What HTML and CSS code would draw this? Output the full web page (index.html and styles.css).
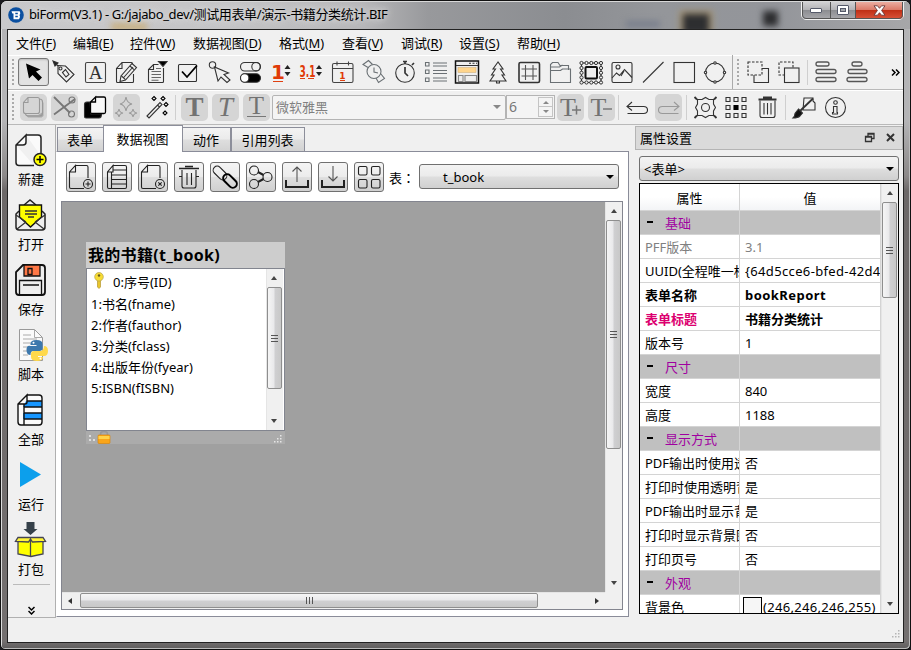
FILE: index.html
```html
<!DOCTYPE html>
<html lang="zh-CN">
<head>
<meta charset="utf-8">
<title>biForm</title>
<link rel="stylesheet" href="styles.css">
</head>
<body>
<div class="window">
  <header class="titlebar">
    <svg class="app-icon" width="16" height="16" viewBox="0 0 16 16"><circle cx="8" cy="8" r="7.8" fill="#0a4fa0"/><path d="M3.5 4.2h8.2q1.3 3-.4 3.8 1.6 1.5-.4 4.200H5.500V6.500H4.300z" fill="#fff"/><path d="M7.300 6.500h2.500M7.300 9.500h2.500" stroke="#0a4fa0" stroke-width="1.300"/></svg>
    <span class="title-text">biForm(V3.1) - G:/jajabo_dev/测试用表单/演示-书籍分类统计.BIF</span>
    <div class="glass"><i class="blot a"></i><i class="blot b"></i><i class="blot c"></i><i class="blot d"></i></div>
    <div class="winbtns">
      <span class="wb"><svg width="14" height="8" viewBox="0 0 14 8"><rect x="1.500" y="2.500" width="11" height="4" rx=".5" fill="#fff" stroke="#555a6a"/></svg></span>
      <span class="wb mid"><svg width="12" height="10" viewBox="0 0 12 10"><rect x=".5" y=".5" width="11" height="9" rx=".5" fill="#fff" stroke="#555a6a"/><rect x="3.500" y="3.500" width="5" height="3" fill="#a5a8ad" stroke="#555a6a"/></svg></span>
      <span class="wb close"><svg width="13" height="11" viewBox="0 0 13 11"><path d="M1 .8h3.500l2 2.500 2-2.500H12L8.600 5.500 12 10.200H8.500l-2-2.500-2 2.500H1l3.400-4.700z" fill="#fff" stroke="#6b3a3a" stroke-width=".9"/></svg></span>
    </div>
  </header>
  <div class="client">
    <nav class="menu">
      <span>文件(<u>F</u>)</span><span>编辑(<u>E</u>)</span><span>控件(<u>W</u>)</span><span>数据视图(<u>D</u>)</span><span>格式(<u>M</u>)</span><span>查看(<u>V</u>)</span><span>调试(<u>R</u>)</span><span>设置(<u>S</u>)</span><span>帮助(<u>H</u>)</span>
    </nav>
    <div class="toolbar">
      <i class="grip"></i>
      <svg class="ic pressed"><path d="M8 7l3 15 3.500-3.500 6 6 3.500-3.500-6-6 4.500-2z" fill="#000"/></svg>
      <svg class="ic"><path d="M5 5l4 4M9 8.500l7.500.5L25 17.500 17.500 25 9 16.500z"/><path d="M13.500 15.500l3-3 3.500 5-3 2.500z"/><circle cx="11.500" cy="11.500" r="1.500"/><path d="M4 4l5 2-3 3z" fill="#222"/></svg>
      <svg class="ic"><rect x="5.500" y="5.500" width="20" height="20" rx="1.500" stroke="#444"/><text x="15.500" y="22" class="serif" font-size="19">A</text></svg>
      <svg class="ic"><path d="M21.500 8V6.500q0-1-1-1H11l-5.500 6v13q0 1 1 1h15q1 0 1-1V17M11 5.500v6H5.500"/><path d="M21 6.500l4.500 4L14.500 23 9 24.500l1-5.500z" fill="#f0f0f0"/><path d="M19 9l4 3.700M10.500 19l4 3.700M12.700 20.500L22 10"/></svg>
      <svg class="ic"><path d="M16.500 7.500h-5l-5 5v12q0 1 1 1h13q1 0 1-1V11M11.500 7.500v5h-5"/><path d="M9.500 14.500h9.500M9.500 17.500h9.500M9.500 20.500h9.500M9.500 23.300h7M14 11.500h5" stroke="#666"/><path d="M16.500 4.500h8.500l-4 5z" fill="#000"/></svg>
      <svg class="ic"><rect x="5.500" y="7.500" width="18" height="17" rx="1"/><path d="M9 14.500l5 5.500L24 8.500" stroke="#000" stroke-width="1.800"/></svg>
      <svg class="ic"><circle cx="8.500" cy="8" r="3.200"/><path d="M10.500 10l3.500 14 3-4 6 5.500 3-2.500-6-5.500 4.500-1.500z"/></svg>
      <svg class="ic"><rect x="5.500" y="5.500" width="20" height="8.500" rx="4.250"/><circle cx="21" cy="9.700" r="4.200"/><rect x="5.500" y="16.800" width="20" height="8.500" rx="4.250" fill="#000"/><circle cx="9.700" cy="21" r="4.200" fill="#fff"/></svg>
      <svg class="ic num"><text x="12" y="21.500" font-size="21">1</text><path d="M7 24.500h10"/><path d="M18.500 12l3-4 3 4zM18.500 15l3 4 3-4z" class="blk"/></svg>
      <svg class="ic num"><text x="10.500" y="20" font-size="14" textLength="16" lengthAdjust="spacingAndGlyphs">3.1</text><path d="M3 21.500h5M11 21.500h6"/><path d="M19 12l3-4 3 4zM19 15l3 4 3-4z" class="blk"/></svg>
      <svg class="ic num"><g class="ln"><rect x="4.500" y="6.500" width="20.500" height="19" rx="1.500"/><path d="M4.500 11.500H25M9 4.500v4M20.500 4.500v4"/></g><text x="14.500" y="21.500" font-size="9">1</text><path d="M12 23.500h5"/></svg>
      <svg class="ic soft"><circle cx="15" cy="14.500" r="7"/><path d="M9 10.500l-5-3 5.500-4 4 4M17 21l2.500 4.500 6-4-4-5M15 10.500v4.500l4 1"/></svg>
      <svg class="ic"><circle cx="15" cy="16" r="9.300"/><path d="M15 10v6l3 3M13 4.500h4M15 5v2M22 8l2-2" stroke-width="1.700"/></svg>
      <svg class="ic soft"><path d="M12 6h14M12 9h14M12 13.500h14M12 16.500h14M12 21h14M12 24h14"/><path d="M4.500 5.500h3.500v3.500H4.500zM4.500 13h3.500v3.500H4.500zM4.500 21h3.500v3.500H4.500z"/></svg>
      <svg class="ic"><rect x="3.500" y="4" width="23" height="22" fill="#eee" stroke="#111" stroke-width="1.500"/><path d="M4 8.500h22M17 6.300h2M20.500 6.300h2M24 6.300h1"/><rect x="6" y="10.500" width="18" height="5" fill="#ffd58c" stroke="#c8a878" stroke-width=".5"/><path d="M6.500 18.500H11v6H6.500zM13 18.500h11.500v6H13z" stroke="#888"/></svg>
      <svg class="ic"><path d="M15 5l-5 7h2.500L8.500 18H11l-4 6h16l-4-6h2.500l-4-6H20zM13.500 24v2h3v-2"/></svg>
      <svg class="ic"><rect x="5" y="5.500" width="20.500" height="20" rx="1.500" stroke-width="1.600"/><path d="M11.500 8v15M19 8v15M7.500 12h15.500M7.500 19h15.500" stroke="#555"/></svg>
      <svg class="ic soft"><path d="M5.500 25.500V7.500l2-2H13l2 3h8.500v4.500M5.500 10h9l3-2M5.500 13.500h10l2-1.500h8v13.500h-20z"/></svg>
      <svg class="ic"><rect x="5.500" y="6" width="19.500" height="19.500" rx="1"/><g fill="#f0f0f0" stroke-width="1"><circle cx="5.500" cy="6" r="1.600"/><circle cx="10.500" cy="6" r="1.600"/><circle cx="15.300" cy="6" r="1.600"/><circle cx="20" cy="6" r="1.600"/><circle cx="25" cy="6" r="1.600"/><circle cx="5.500" cy="25.500" r="1.600"/><circle cx="10.500" cy="25.500" r="1.600"/><circle cx="15.300" cy="25.500" r="1.600"/><circle cx="20" cy="25.500" r="1.600"/><circle cx="25" cy="25.500" r="1.600"/><circle cx="5.500" cy="11" r="1.600"/><circle cx="5.500" cy="15.800" r="1.600"/><circle cx="5.500" cy="20.500" r="1.600"/><circle cx="25" cy="11" r="1.600"/><circle cx="25" cy="15.800" r="1.600"/><circle cx="25" cy="20.500" r="1.600"/></g><rect x="9.500" y="10" width="11.500" height="11.500" rx="1" fill="#eee" stroke="#111" stroke-width="2"/></svg>
      <svg class="ic"><rect x="5" y="5.500" width="20" height="20" rx="1.500"/><circle cx="11" cy="10" r="2"/><path d="M5 21l4.500-5 3 2.500 5-6 7.500 8M17 14l-3 5"/></svg>
      <svg class="ic"><path d="M5 25.500L25.500 5"/></svg>
      <svg class="ic"><rect x="5" y="5.500" width="20.500" height="20"/></svg>
      <svg class="ic"><circle cx="15" cy="15.500" r="9.500"/><g fill="#eee"><circle cx="15" cy="6" r="1.200"/><circle cx="15" cy="25" r="1.200"/><circle cx="5.500" cy="15.500" r="1.200"/><circle cx="24.500" cy="15.500" r="1.200"/></g></svg>
      <i class="edge"></i><i class="grip second"></i>
      <svg class="ic"><rect x="5" y="5" width="14" height="13" stroke-dasharray="2.500 1.500"/><path d="M19 11.500h6.500v14H11V18"/></svg>
      <svg class="ic"><path d="M11 18H5V5h14v6" stroke-dasharray="2.500 1.500"/><rect x="10.500" y="11" width="14.500" height="14.500"/></svg>
      <i class="sep"></i>
      <svg class="ic bars"><rect x="5" y="5" width="13" height="4" rx="2"/><rect x="5" y="12.500" width="20" height="4" rx="2"/><rect x="5" y="20.500" width="20" height="4" rx="2"/></svg>
      <svg class="ic bars"><rect x="10" y="5" width="10" height="4" rx="2"/><rect x="6" y="12.500" width="19" height="4" rx="2"/><rect x="5" y="20.500" width="20" height="4" rx="2"/></svg>
      <svg class="more" width="9" height="7" viewBox="0 0 9 7"><path d="M1 .5l3 3-3 3M5 .5l3 3-3 3" fill="none" stroke="#000" stroke-width="1.500"/></svg>
    </div>
    <div class="toolbar two">
      <i class="grip"></i>
      <svg class="ic off"><path d="M21 22.500l3-2V8l1.500 3v13l-2 1.500H10l-2-2.500h12z" fill="#aaa" stroke="none"/><path d="M10 5.500h9.500q2 0 2 2v12q0 2-2 2h-12q-2 0-2-2v-9zv5H5.500M21.500 7q3 0 3 3v11q0 3-3 3H10q-2 0-2.500-2"/></svg>
      <svg class="ic off dark"><path d="M5 5l16 16M26 7L5 22.500" stroke-width="1.800"/><circle cx="23" cy="8" r="3"/><circle cx="22.500" cy="22" r="3"/></svg>
      <svg class="ic"><path d="M10 10H7q-2.500 0-2.500 2.500v12q0 1.500 1.500 1.500h13q2.500 0 2.500-4H11z" fill="#000"/><path d="M15.500 5h8.500q1.500 0 1.500 1.500v13.500q0 1.500-1.500 1.500H12q-1.500 0-1.500-1.500v-10l5-5v5h-5" fill="#f8f8f8" stroke="#000" stroke-width="1.300"/></svg>
      <svg class="ic off"><path d="M15 5q1 6 6 7-5 1-6 7-1-6-6-7 5-1 6-7zM8 17q.5 3.500 4 4-3.500.500-4 4-.5-3.500-4-4 3.500-.5 4-4zM22 17q.5 3.500 4 4-3.500.500-4 4-.5-3.500-4-4 3.500-.5 4-4z"/></svg>
      <svg class="ic"><path d="M5 24l13-13.500 2 2L7 26zM15.500 13l2 2"/><path d="M12 4.500l2 2-2 2-2-2zM21 4.500l2 2-2 2-2-2zM24 10.500l2 2-2 2-2-2zM23 19l2 2-2 2-2-2z" fill="#fff" stroke="#000"/></svg>
      <i class="sep"></i>
      <svg class="ic off dark"><text x="15.500" y="24" class="serif" font-size="27" font-weight="bold">T</text></svg>
      <svg class="ic off dark"><text x="15.500" y="24" class="serif" font-size="27" font-style="italic">T</text></svg>
      <svg class="ic off dark"><text x="15.500" y="22" class="serif" font-size="25">T</text><path d="M6 24.500h19"/></svg>
      <div class="fontbox"><span>微软雅黑</span><i class="tri"></i></div>
      <div class="spin"><span>6</span><div class="spinbtn"><i class="up"></i><i class="dn"></i></div></div>
      <svg class="ic off dark"><text x="13" y="24" class="serif" font-size="26">T</text><path d="M17 18h9M21.500 13.500v9" stroke-width="1.500"/></svg>
      <svg class="ic off dark"><text x="12.500" y="24" class="serif" font-size="26">T</text><path d="M17 17h9" stroke-width="1.500"/></svg>
      <i class="sep snug"></i>
      <svg class="ic"><path d="M10 10l-5 4.500 5 4M5.500 14.500h16q4 0 4 3.500t-4 3.500H5.500"/></svg>
      <svg class="ic off"><path d="M21 10l5 4.500-5 4M25.500 14.500h-16q-4 0-4 3.500t4 3.500h16"/></svg>
      <i class="sep"></i>
      <svg class="ic"><path d="M12 7.500l3.500-2 3.500 2h4.500V12l2 3.500-2 3.500v4.500H19l-3.500 2-3.500-2H7.500V19l-2-3.500 2-3.500V7.500z"/><circle cx="15.500" cy="15.500" r="4"/><path d="M4.500 5l2.500 2.500M26.500 5L24 7.500M4.500 26l2.500-2.500M26.500 26L24 23.500" stroke-width="1.800"/></svg>
      <svg class="ic"><path d="M5 5.500h4v4H5zM13 5.500h4v4h-4zM21 5.500h4v4h-4zM5 13.500h4v4H5zM21 13.500h4v4h-4zM5 21.500h4v4H5zM13 21.500h4v4h-4zM21 21.500h4v4h-4z"/><path d="M13 13.500h4v4h-4z" fill="#000" stroke="#000"/></svg>
      <svg class="ic"><path d="M6.500 7.500h18M11 5.500h9" stroke-width="1.800"/><path d="M8 8.500v15q0 2 2 2h11q2 0 2-2v-15M12 11v11.500M15.500 11v11.500M19 11v11.500"/></svg>
      <i class="sep"></i>
      <svg class="ic"><path d="M15 6h9v3l2 2v7H14z"/><path d="M11 19L24 6.500" stroke-width="1.800"/><path d="M9.500 17l4 4-2.500 3q-2 2-7 2 2-2 2-4.500z" fill="#111"/></svg>
      <svg class="ic"><circle cx="15.500" cy="15.500" r="10"/><circle cx="15.500" cy="10.500" r="1.800"/><path d="M13.500 14.500h3.500v6h.5v1.500h-5v-1.500h1z"/></svg>
    </div>
    <main class="main">
      <aside class="side">
        <div class="sbtn"><svg width="34" height="34" viewBox="0 0 34 34"><path d="M12 2h12q3 0 3 3v18M20 32.500H5q-3 0-3-3V12L12 2v7q0 3-3 3H2" fill="#fafafa" stroke="#222" stroke-width="1.500"/><circle cx="26" cy="26.500" r="6" fill="#ff0" stroke="#222" stroke-width="1.500"/><path d="M26 23v7M22.500 26.500h7" stroke="#000" stroke-width="1.500"/></svg><span>新建</span></div>
        <div class="sbtn"><svg width="34" height="34" viewBox="0 0 34 34"><path d="M10 7l6-5 6 5M5 13l-3 3v13q0 3 3 3h23q3 0 3-3V16l-3-3" fill="#eee" stroke="#222" stroke-width="1.500"/><path d="M5.500 7h22v12l-11 10-11-10z" fill="#ff0" stroke="#111" stroke-width="1.400"/><path d="M2 17l10 7M31 17l-10 7M3 31l9-7M30 31l-9-7M11 13h12M11 16h12M14 19h6" fill="none" stroke="#333" stroke-width="1.300"/></svg><span>打开</span></div>
        <div class="sbtn"><svg width="34" height="34" viewBox="0 0 34 34"><path d="M9 2h19q3 0 3 3v24q0 3-3 3H5q-3 0-3-3V9z" fill="#eee" stroke="#111" stroke-width="1.800"/><path d="M10 2h16v11H10z" fill="#ff7745" stroke="#111" stroke-width="1.300"/><path d="M14 5.500h4v6h-4zM5.500 31V17.500h22V31M9 22h16" fill="none" stroke="#111" stroke-width="1.300"/></svg><span>保存</span></div>
        <div class="sbtn"><svg width="34" height="34" viewBox="0 0 34 34"><path d="M5.500 1.500h15l8 8v23h-23z" fill="#fafafa" stroke="#999"/><path d="M20.500 1.500v8h8M9 7h8M9 11h14M9 15h14M9 19h7M9 23h5M9 27h5" fill="none" stroke="#aaa"/><path d="M16.500 16q0-4 6-4t6 4v4q0 3-3 3h-6q-3 0-3 4-4 0-4-5t4-4h6v-1h-6z" fill="#3c78ad"/><path d="M30 18q4 0 4 5t-4 5h-6v1h5q0 4-6 4t-6-4v-3q0-3 3-3h6q4 0 4-5z" fill="#ffd94b"/><circle cx="19.500" cy="14.700" r="1" fill="#fff"/><circle cx="26.500" cy="30.500" r="1" fill="#fff"/></svg><span>脚本</span></div>
        <div class="sbtn"><svg width="34" height="34" viewBox="0 0 34 34"><path d="M13 2h12q3 0 3 3v24q0 3-3 3H7q-3 0-3-3V11z" fill="#fafafa"/><path d="M12 8h16v6H9zM9 20h19v6H9z" fill="#1696ff"/><path d="M13 2h12q3 0 3 3v24q0 3-3 3H7q-3 0-3-3V11L13 2v7q0 2-2 2H4M10 11v21M13 8h15M10 14h18M10 20h18M10 26h18" fill="none" stroke="#111" stroke-width="1.400"/></svg><span>全部</span></div>
        <div class="sbtn"><svg width="34" height="34" viewBox="0 0 34 34"><path d="M6 4l21 12.500L6 29z" fill="#0c9fec"/></svg><span>运行</span></div>
        <div class="sbtn"><svg width="34" height="34" viewBox="0 0 34 34"><path d="M12.500 -1h8v7h3l-7 6-7-6h3z" fill="#354049"/><path d="M4 17h25v14l-12 2.500L4 31z" fill="#ff0" stroke="#445" stroke-width="1.300"/><path d="M4 14.500h25l2.500 4-13 .5-2-3-2 3-13-.5zM16.500 17v16" fill="#fff43a" stroke="#445" stroke-width="1.300"/></svg><span>打包</span></div>
        <i class="srule"></i>
        <svg class="smore" width="7" height="9" viewBox="0 0 7 9"><path d="M.5 1l3 3 3-3M.5 5l3 3 3-3" fill="none" stroke="#000" stroke-width="1.500"/></svg>
      </aside>
      <section class="center">
        <div class="tabs"><span class="tab t1">表单</span><span class="tab on">数据视图</span><span class="tab t3">动作</span><span class="tab t4">引用列表</span></div>
        <div class="pane">
          <div class="dbtools">
            <button class="tb"><svg><path d="M9.500 3.500h11q1.500 0 1.500 1.500v11M18 26.500H5q-1.500 0-1.500-1.500V10l6-6.500V10h-6"/><circle cx="22" cy="22" r="4.500"/><path d="M22 19.500v5M19.500 22h5"/></svg></button>
            <button class="tb"><svg><path d="M11 3.500h12q1.500 0 1.500 1.500v20q0 1.500-1.500 1.500H7q-1.500 0-1.500-1.500V10l5.500-6.500V10H5.500M9.500 10v16M11.500 8h13M10 13h14.500M10 17.500h14.500M10 22h14.500"/></svg></button>
            <button class="tb"><svg><path d="M9.500 3.500h11q1.500 0 1.500 1.500v11M18 26.500H5q-1.500 0-1.500-1.500V10l6-6.500V10h-6"/><circle cx="22" cy="22" r="4.500"/><path d="M20.300 20.300l3.400 3.400M23.700 20.300l-3.400 3.400"/></svg></button>
            <button class="tb"><svg><path d="M5 6.500h20M11 4.500h8" stroke-width="1.700"/><path d="M8 8v16q0 2 2 2h10q2 0 2-2V8M13 11v12M17.500 11v12M5 14.500h3M22 14.500h3"/></svg></button>
            <button class="tb"><svg><rect x="2" y="7" width="16" height="8" rx="4" transform="rotate(45 10 11)"/><rect x="12" y="15" width="16" height="8" rx="4" transform="rotate(45 20 19)" stroke="#000" stroke-width="2"/></svg></button>
            <button class="tb"><svg><circle cx="8" cy="8.500" r="4.500"/><circle cx="8" cy="22" r="4.500"/><circle cx="21.500" cy="15" r="4.500"/><path d="M12 10l5.500 3M12 20l5.500-3" stroke-width="2"/></svg></button>
            <button class="tb"><svg><path d="M15 20V5M10.500 9.500L15 5l4.500 4.500" stroke="#555"/><path d="M4 18v7h22v-7" stroke-width="2"/></svg></button>
            <button class="tb"><svg><path d="M15 4v15M10.500 14.500L15 19l4.500-4.500" stroke="#555"/><path d="M4 18v7h22v-7" stroke-width="2"/></svg></button>
            <button class="tb"><svg><rect x="4.500" y="4.500" width="8.500" height="8.500" rx="1.500"/><rect x="17.500" y="4.500" width="8.500" height="8.500" rx="1.500"/><rect x="4.500" y="17.500" width="8.500" height="8.500" rx="1.500"/><rect x="17.500" y="17.500" width="8.500" height="8.500" rx="1.500"/></svg></button>
            <span class="lbl">表<span class="colon" lang="zh-TW">：</span></span>
            <div class="combo wide"><span>t_book</span><i class="tri"></i></div>
          </div>
          <div class="canvas">
            <div class="surface">
              <div class="node">
                <div class="node-head">我的书籍(t_book)</div>
                <div class="node-body">
                  <ul>
                    <li class="key"><svg width="12" height="17" viewBox="0 0 12 17"><path d="M4.500 7h3v8L6 16.500 4.500 15z" fill="#e9c62c" stroke="#a98a20" stroke-width=".6"/><circle cx="6" cy="4.800" r="4.300" fill="#f7dc35" stroke="#b3a050" stroke-width=".7"/><circle cx="6" cy="3.500" r="1.200" fill="#665a20"/></svg>0:序号(ID)</li>
                    <li>1:书名(fname)</li><li>2:作者(fauthor)</li><li>3:分类(fclass)</li><li>4:出版年份(fyear)</li><li>5:ISBN(fISBN)</li>
                  </ul>
                  <div class="vs"><i class="au"></i><i class="thumb nt"></i><i class="ad"></i></div>
                </div>
                <div class="node-foot"><svg width="26" height="13" viewBox="0 0 26 13"><path d="M3 4h2v2H3zM3 8h2v2H3zM7 8h2v2H7z" fill="#ddd"/><path d="M14.500 5V3q0-2.500 3.500-2.500t3.500 2.500v2" fill="none" stroke="#999" stroke-width="1.600"/><rect x="12" y="4" width="12" height="8.500" rx="1" fill="#f9a51a" stroke="#d98200" stroke-width=".6"/><path d="M12.500 5h11v3h-11z" fill="#ffd24a"/></svg><svg width="12" height="10" viewBox="0 0 12 10"><path d="M7 0h1.500v1.500H7zM4 3h1.500v1.500H4zM7 3h1.500v1.500H7zM1 6h1.500v1.500H1zM4 6h1.500v1.500H4zM7 6h1.500v1.500H7z" fill="#e6e6e6"/></svg></div>
              </div>
            </div>
            <div class="vs"><i class="au"></i><i class="thumb ct"></i><i class="ad"></i></div>
            <div class="hs"><i class="al"></i><i class="thumb ht"></i><i class="ar"></i></div>
            <div class="corner"></div>
          </div>
        </div>
      </section>
      <section class="dock">
        <div class="dock-title"><span>属性设置</span><svg width="34" height="12" viewBox="0 0 34 12"><path d="M4 4V1.500h6v5H7.500M4 2h6" fill="none" stroke="#333" stroke-width="1.300"/><path d="M1.500 4.500h6v5h-6zM1.500 5.200h6" fill="none" stroke="#333" stroke-width="1.300"/><path d="M23 2l7 7M30 2l-7 7" stroke="#333" stroke-width="2"/></svg></div>
        <div class="combo obj"><span>&lt;表单&gt;</span><i class="tri"></i></div>
        <div class="props">
          <div class="grid">
            <div class="row head"><b>属性</b><b>值</b></div>
            <div class="row cat"><b>基础</b><b></b></div>
            <div class="row dim"><b>PFF版本</b><b>3.1</b></div>
            <div class="row"><b>UUID(全程唯一标</b><b class="uuid">{64d5cce6-bfed-42d4</b></div>
            <div class="row strong"><b>表单名称</b><b class="latin">bookReport</b></div>
            <div class="row strong pink"><b>表单标题</b><b>书籍分类统计</b></div>
            <div class="row"><b>版本号</b><b>1</b></div>
            <div class="row cat"><b>尺寸</b><b></b></div>
            <div class="row"><b>宽度</b><b>840</b></div>
            <div class="row"><b>高度</b><b>1188</b></div>
            <div class="row cat"><b>显示方式</b><b></b></div>
            <div class="row"><b>PDF输出时使用透</b><b>否</b></div>
            <div class="row"><b>打印时使用透明背</b><b>是</b></div>
            <div class="row"><b>PDF输出时显示背</b><b>是</b></div>
            <div class="row"><b>打印时显示背景图</b><b>否</b></div>
            <div class="row"><b>打印页号</b><b>否</b></div>
            <div class="row cat"><b>外观</b><b></b></div>
            <div class="row"><b>背景色</b><b class="col"><i class="swatch"></i>(246,246,246,255)</b></div>
          </div>
          <div class="vs"><i class="au"></i><i class="thumb pt"></i><i class="ad"></i></div>
        </div>
      </section>
    </main>
    <footer class="status"><svg width="10" height="10" viewBox="0 0 10 10"><path d="M7 0h1.500v1.500H7zM4 3h1.500v1.500H4zM7 3h1.500v1.500H7zM1 6h1.500v1.500H1zM4 6h1.500v1.500H4zM7 6h1.500v1.500H7z" fill="#b5b5b5"/></svg></footer>
  </div>
</div>
</body>
</html>
```
FILE: styles.css
```css
* { box-sizing: border-box; }
body { margin: 0; background: #1a1a1e; font: 13px/20px "Noto Sans", "Noto Sans CJK SC", sans-serif; color: #000; overflow: hidden; }
i { font-style: normal; display: block; flex: none; }
svg { display: block; flex: none; }
.window { width: 911px; height: 650px; padding: 0 6px 6px 6px; border: 1px solid #111; border-radius: 7px 7px 5px 5px; overflow: hidden;
  background: linear-gradient(#b4b4b6 0, #b4b4b6 120px, #8c8989 175px, #6c6868 190px, #747070 640px, #5e5c5c); box-shadow: inset 1px 1px 0 #ddd, inset -1px -1px 0 #bbb; }
.titlebar { position: relative; display: flex; height: 28px; margin: 0 -6px; padding-left: 7px; overflow: hidden; border-top: 1px solid #d8d8d8;
  background: linear-gradient(90deg, #c9c9cb 0, #c4c4c6 25%, #b6b6b8 40%, #98999c 47%, #8b8d91 62%, #94969a 72%, #93959a 85%, #a7a7a9 100%); }
.app-icon { margin-top: 5px; z-index: 1; }
.title-text { margin: 2px 0 0 5px; z-index: 1; white-space: nowrap; letter-spacing: -.38px; text-shadow: 0 0 6px #ddd, 0 0 8px #ddd; }
.glass { position: absolute; inset: 0; }
.blot { position: absolute; filter: blur(3px); }
.blot.a { left: 678px; top: 8px; width: 34px; height: 24px; background: #2d2e30; border: 4px solid #a39376; border-bottom: 0; }
.blot.b { left: 762px; top: 9px; width: 15px; height: 15px; background: #2c2d2f; }
.blot.c { left: 625px; top: 19px; width: 34px; height: 6px; background: #777d8c; }
.blot.d { left: 110px; top: 20px; width: 36px; height: 9px; background: #c8b286; }
.winbtns { position: absolute; left: 800px; top: -2px; display: flex; width: 103px; height: 20px; border: 1px solid #f1f1f1; outline: 1px solid #555; outline-offset: -2px; border-radius: 0 0 5px 5px; overflow: hidden; }
.wb { width: 28px; display: flex; align-items: center; justify-content: center; background: linear-gradient(#d5d5d7, #b3b3b6 48%, #8b8c90 50%, #a9a9ad); }
.wb.mid { width: 27px; border: solid #555; border-width: 0 1px; }
.wb.close { width: 47px; background: linear-gradient(#eeb4a8, #dc7b69 48%, #bf2e14 50%, #d9543a); }
.client { height: 614px; border: 1px solid #222; background: #f0f0f0; width: 897px; display: flex; flex-direction: column; }
.menu { height: 26px; display: grid; grid-template-columns: 57px 57px 63px 86px 63px 59px 58px 58px 60px; padding: 3px 0 0 8px; border-bottom: 1px solid #fff; white-space: nowrap; letter-spacing: -.1px; flex: none; }
.menu u { text-underline-offset: 2px; }
.toolbar { height: 34px; display: flex; align-items: center; padding: 0 0 1px 4px; border-bottom: 1px solid #b9b9b9; flex: none; }
.toolbar.two { height: 35px; border-top: 1px solid #fff; padding-top: 0; }
.grip { width: 2px; height: 27px; margin-right: 4px; background: repeating-linear-gradient(#aaa 0 2px, transparent 2px 4px); }
.grip.second { margin: 0 4px 0 4px; }
.edge { width: 1px; height: 34px; background: #aaa; margin-left: 1px; }
.sep { width: 1px; height: 25px; background: #cfcfcf; margin: 0 3px 0 2px; }
.sep.snug { margin-left: 1px; }
.ic { width: 31px; height: 31px; fill: none; stroke: #333; stroke-width: 1.100; }
.ic text { fill: #333; stroke: none; text-anchor: middle; }
.serif { font-family: "Liberation Serif", serif; }
.pressed { height: 28px; border: 1px solid #777; border-radius: 3px; background: #e2e2e2; box-shadow: inset 0 1px 2px #bbb; }
.pressed path { stroke: none; transform: translate(-1px, -2.500px); }
.soft { stroke: #6a7074; }
.bars { stroke: #555; stroke-width: 1.300; }
.num { stroke: #e04010; }
.num text { fill: #e03a08; font: bold 20px "DejaVu Sans", sans-serif; }
.num text[font-size="21"] { font-size: 20px; }
.num text[font-size="14"] { font-size: 15px; }
.num text[font-size="9"] { font-size: 9px; }
.num .blk { fill: #222; stroke: none; }
.num .ln { stroke: #444; }
.off { width: 27px; height: 27px; margin: 0 2px; border-radius: 5px; background: #d5d5d5; stroke: #999; }
.off > * { transform: translate(-2px, -2px); }
.off.dark { stroke: #777; }
.off.dark text { fill: #727272; }
.more { margin: 0 0 0 18px; }
.fontbox { width: 234px; height: 25px; border: 1px solid #b4b4b4; border-radius: 2px; background: #f4f4f4; display: flex; align-items: center; justify-content: space-between; padding: 0 4px 0 3px; color: #808080; flex: none; }
.tri { border: solid transparent; border-width: 4px 4px 0; border-top-color: #000; }
.fontbox .tri { border-top-color: #888; }
.spin { width: 49px; height: 24px; border: 1px solid #b4b4b4; background: #f4f4f4; display: flex; justify-content: space-between; align-items: center; padding: 0 1px 0 2px; color: #777; font-size: 14px; flex: none; }
.spinbtn { width: 15px; height: 20px; border: 1px solid #c4c4c4; display: flex; flex-direction: column; justify-content: space-around; align-items: center; background: linear-gradient(transparent 8px, #c4c4c4 8px 9px, transparent 9px); }
.up, .dn { border: solid transparent; }
.up { border-width: 0 3px 3px; border-bottom-color: #888; }
.dn { border-width: 3px 3px 0; border-top-color: #888; }
.main { height: 493px; display: flex; flex: none; }
.side { width: 48px; border-right: 1px solid #b0b0b0; border-bottom: 1px solid #b0b0b0; display: flex; flex-direction: column; align-items: center; padding: 8px 1px 0 0; }
.sbtn { height: 65px; display: flex; flex-direction: column; align-items: center; flex: none; }
.sbtn span { margin-top: 2px; height: 20px; }
.sbtn svg { overflow: visible; }
.srule { width: 37px; height: 1px; background: #bbb; margin-top: -4px; }
.smore { margin-top: 21px; }
.center { width: 573px; display: flex; flex-direction: column; flex: none; }
.tabs { height: 26px; display: flex; align-items: flex-end; padding-left: 1px; flex: none; }
.tab { height: 24px; border: 1px solid #8c8e9a; border-bottom: 0; background: linear-gradient(#f3f3f3, #ebebeb 48%, #dedede 52%, #d2d2d2); text-align: center; padding: 2px 1px 0 0; }
.t1 { width: 47px; }
.tab.on { width: 80px; height: 27px; margin: 0 0 -1px -1px; background: #fff; z-index: 1; padding-top: 3px; }
.t3 { width: 49px; margin-left: -1px; }
.t4 { width: 74px; }
.pane { height: 466px; background: #fff; border: 1px solid #8a8c99; border-left-color: #fff; }
.dbtools { height: 49px; display: flex; padding: 10px 0 0 9px; }
.tb { width: 30px; height: 30px; margin: 0 6px 0 0; padding: 0; border: 1px solid #707070; border-radius: 3px; background: linear-gradient(#f4f4f4, #ececec 48%, #dedede 52%, #d0d0d0); flex: none; }
.tb svg { width: 30px; height: 30px; margin: -1px; fill: none; stroke: #222; stroke-width: 1.100; }
.lbl { margin: 6px 0 0 -1px; width: 30px; white-space: nowrap; overflow: visible; flex: none; }
.colon { font-family: "Noto Sans CJK TC", sans-serif; line-height: 1; }
.combo { display: flex; align-items: center; justify-content: space-between; border: 1px solid #707070; border-radius: 3px; padding: 0 4px; background: linear-gradient(#f3f3f3, #ebebeb 48%, #dedede 52%, #d0d0d0); flex: none; }
.wide { width: 200px; height: 25px; margin-top: 2px; padding-left: 23px; }
.canvas { margin-left: 4px; width: 562px; height: 409px; border: 1px solid #83858f; display: grid; grid-template: 390px 17px / 543px 17px; }
.surface { position: relative; background: #a0a0a0; }
.node { position: absolute; left: 24px; top: 40px; width: 199px; }
.node-head { height: 26px; background: #cdcdcd; font-size: 16px; font-weight: bold; line-height: 26px; padding-left: 2px; white-space: nowrap; letter-spacing: .3px; }
.node-body { height: 163px; border: 1px solid #82858f; background: #fff; display: flex; }
.node-body ul { list-style: none; margin: 0; padding: 3px 0 0 4px; width: 180px; }
.node-body li { height: 21px; line-height: 21px; white-space: nowrap; }
.node-body li.key { height: 22px; display: flex; gap: 8px; padding-left: 2px; }
.node-foot { height: 13px; background: #ababab; display: flex; justify-content: space-between; }
.node-foot svg:last-child { margin-top: 4px; }
.vs { width: 17px; display: flex; flex-direction: column; align-items: center; background: #f0f0f0; box-shadow: inset 1px 0 #e5e5e5; flex: none; }
.node-body .vs { padding-right: 1px; margin-left: -1px; }
.hs { height: 17px; display: flex; align-items: center; background: #f0f0f0; box-shadow: inset 0 1px #e5e5e5; }
.corner { background: #f0f0f0; }
.thumb { width: 15px; border: 1px solid #8e8e8e; border-radius: 2px; }
.vs .thumb { background: linear-gradient(#555, #555) center calc(50% - 3px) / 7px 1px no-repeat, linear-gradient(#555, #555) center / 7px 1px no-repeat, linear-gradient(#555, #555) center calc(50% + 3px) / 7px 1px no-repeat, linear-gradient(90deg, #f5f5f5, #e9e9eb 45%, #cfcfd1 55%, #c8c8c8); }
.ht { width: 458px; height: 15px; background: linear-gradient(#555, #555) calc(50% - 3px) center / 1px 7px no-repeat, linear-gradient(#555, #555) center / 1px 7px no-repeat, linear-gradient(#555, #555) calc(50% + 3px) center / 1px 7px no-repeat, linear-gradient(#f5f5f5, #e9e9eb 45%, #cfcfd1 55%, #c8c8c8); }
.ct { height: 229px; }
.nt { height: 102px; }
.pt { height: 96px; }
.au, .ad { border: solid transparent; margin: 7px 0; }
.au { border-width: 0 3.500px 4px; border-bottom-color: #444; }
.ad { border-width: 4px 3.500px 0; border-top-color: #444; margin-top: auto; }
.al, .ar { border: solid transparent; margin: 0 8px 0 6px; }
.al { border-width: 3.500px 4px 3.500px 0; border-right-color: #333; }
.ar { border-width: 3.500px 0 3.500px 4px; border-left-color: #333; margin-left: auto; margin-right: 6px; }
.dock { width: 268px; margin-left: 6px; padding-top: 1px; flex: none; }
.dock-title { height: 24px; background: #dadada; border: 1px solid #b4b4b4; display: flex; align-items: center; justify-content: space-between; padding: 0 4px 0 4px; }
.obj { width: 260px; height: 25px; margin: 6px 0 0 4px; }
.props { width: 260px; height: 431px; margin: 2px 0 0 4px; border: 1px solid #000; background: #fff; display: flex; overflow: hidden; }
.grid { width: 241px; flex: none; }
.row { display: flex; height: 24px; border-bottom: 1px solid #d4d4d4; }
.row b { font-weight: normal; width: 100px; border-right: 1px solid #d4d4d4; padding: 2px 0 0 5px; overflow: hidden; white-space: nowrap; flex: none; }
.row b:last-child { width: 141px; }
.row.head { height: 27px; background: linear-gradient(#fff 50%, #f3f4f6); }
.row.head b { text-align: center; padding: 4px 0 0; }
.row.cat { background: #c0c0c0; color: #a000a0; }
.row.cat b:first-child::before { content: ""; display: inline-block; width: 6px; height: 2px; background: #000; margin: 0 12px 5px 2px; }
.row.dim { color: #808080; }
.row.strong b { font-weight: bold; }
.row.strong b.latin { letter-spacing: .45px; }
.row b.uuid { letter-spacing: .35px; }
.row.pink b:first-child { color: #dc0070; }
.row b.col { padding: 2px 0 0 3px; display: flex; letter-spacing: .3px; }
.swatch { width: 19px; height: 19px; border: 1px solid #000; background: #f6f6f6; margin-right: 1px; }
.status { height: 24px; display: flex; justify-content: flex-end; align-items: flex-end; padding: 0 2px 2px; }
```
